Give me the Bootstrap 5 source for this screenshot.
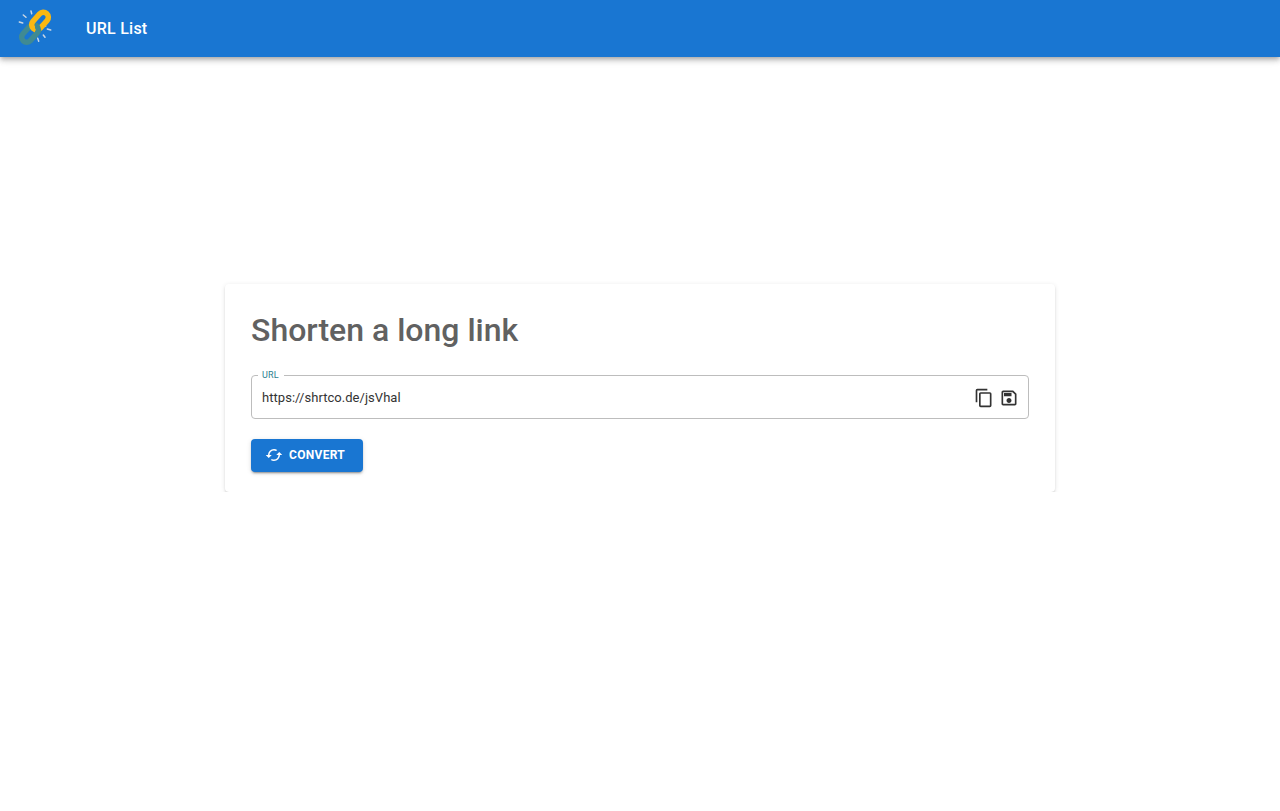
<!DOCTYPE html>
<html lang="en">
<head>
    <meta charset="UTF-8">
    <meta name="viewport" content="width=device-width, initial-scale=1.0">
    <title>URL List</title>
    <link href="https://cdn.jsdelivr.net/npm/bootstrap@5.3.0/dist/css/bootstrap.min.css" rel="stylesheet">
    <style>
        body { font-family: Roboto, "Liberation Sans", sans-serif; background: #fff; }
        .app-bar {
            height: 57px;
            background: #1976d2;
            padding: 0 16px;
            box-shadow: 0 2px 4px -1px rgba(0,0,0,.2), 0 4px 5px 0 rgba(0,0,0,.14), 0 1px 10px 0 rgba(0,0,0,.12);
        }
        .app-logo { width: 40px; height: 40px; margin-top: -5px; }
        .app-link { margin-left: 30px; font-size: 16px; font-weight: 500; letter-spacing: .25px; color: #fff; text-decoration: none; }
        .main-wrap { padding-top: 227px; }
        .short-card {
            width: 830px;
            height: 208px;
            padding: 26px 26px 0;
            border: 0;
            border-radius: 4px;
            box-shadow: 0 3px 1px -2px rgba(0,0,0,.12), 0 2px 2px 0 rgba(0,0,0,.1), 0 1px 5px 0 rgba(0,0,0,.1);
        }
        .short-title { font-size: 32px; font-weight: 500; line-height: 40px; color: #616161; margin: 0 0 21px 0; }
        .url-field {
            height: 48px;
            margin: 0 0 20px 0;
            padding: 0 10px;
            border: 1px solid #bdbdbd;
            border-radius: 4px;
        }
        .url-field legend {
            float: none;
            width: auto;
            margin: 0 0 0 -4px;
            padding: 0 5px 0 4px;
            font-size: 9px;
            letter-spacing: .2px;
            line-height: 9px;
            color: #2f7f8f;
        }
        .url-value { font-size: 13px; letter-spacing: .04px; line-height: 20px; color: #333; height: 36px; }
        .url-icon { width: 20px; height: 20px; fill: #333; display: block; }
        .url-actions { gap: 5px; margin-right: -1px; }
        .convert-btn {
            width: 112px;
            height: 33px;
            padding: 0 0 1px 14px;
            background: #1976d2;
            border: 0;
            border-radius: 4px;
            color: #fff;
            font-size: 12px;
            font-weight: 700;
            letter-spacing: .3px;
            box-shadow: 0 3px 1px -2px rgba(0,0,0,.2), 0 2px 2px 0 rgba(0,0,0,.14), 0 1px 5px 0 rgba(0,0,0,.12);
        }
        .convert-btn svg { width: 18px; height: 18px; fill: #fff; margin-right: -2px; }
    </style>
</head>
<body>
    <!-- Верхняя панель -->
    <header class="app-bar d-flex align-items-center">
        <svg class="app-logo" viewBox="0 0 40 40">
            <defs>
                <clipPath id="link-over"><rect x="19" y="17" width="11" height="10"/></clipPath>
            </defs>
            <g stroke="#c9d6e4" stroke-width="1.5" stroke-linecap="round">
                <path d="M7.300 9L10 11.300M15 5L15.700 7.700M3.300 16L6.700 17M27 18L29.700 20M31.300 23L34.700 24M27.300 29L29 31.300M21.700 32.300L22.700 35.300"/>
            </g>
            <g fill="none" stroke-width="5.500">
                <rect x="4" y="22.500" width="20" height="10" rx="5" transform="rotate(-48 14 27.500)" stroke="#3f8a93"/>
                <rect x="14" y="10" width="20" height="10" rx="5" transform="rotate(-48 24 15)" stroke="#fbb811"/>
                <g clip-path="url(#link-over)">
                    <rect x="4" y="22.500" width="20" height="10" rx="5" transform="rotate(-48 14 27.500)" stroke="#3f8a93"/>
                </g>
            </g>
        </svg>
        <a href="#" class="app-link">URL List</a>
    </header>

    <!-- Форма -->
    <main class="main-wrap d-flex justify-content-center">
        <div class="card short-card">
            <h1 class="short-title">Shorten a long link</h1>
            <fieldset class="url-field">
                <legend>URL</legend>
                <div class="url-value d-flex align-items-center justify-content-between">
                    <span>https://shrtco.de/jsVhal</span>
                    <span class="url-actions d-flex">
                        <svg class="url-icon" viewBox="0 0 24 24"><path d="M19,21H8V7H19M19,5H8A2,2 0 0,0 6,7V21A2,2 0 0,0 8,23H19A2,2 0 0,0 21,21V7A2,2 0 0,0 19,5M16,1H4A2,2 0 0,0 2,3V17H4V3H16V1Z"/></svg>
                        <svg class="url-icon" viewBox="0 0 24 24"><path d="M17 3H5C3.890 3 3 3.900 3 5V19C3 20.100 3.890 21 5 21H19C20.100 21 21 20.100 21 19V7L17 3M19 19H5V5H16.170L19 7.830V19M12 12C10.340 12 9 13.340 9 15S10.340 18 12 18 15 16.660 15 15 13.660 12 12 12M6 6H15V10H6V6Z"/></svg>
                    </span>
                </div>
            </fieldset>
            <button type="button" class="btn convert-btn d-flex align-items-center gap-2">
                <svg viewBox="0 0 24 24"><path d="M19,8L15,12H18A6,6 0 0,1 12,18C11,18 10.030,17.750 9.200,17.300L7.740,18.760C8.970,19.540 10.430,20 12,20A8,8 0 0,0 20,12H23M6,12A6,6 0 0,1 12,6C13,6 13.970,6.250 14.800,6.700L16.260,5.240C15.030,4.460 13.570,4 12,4A8,8 0 0,0 4,12H1L5,16L9,12"/></svg>
                CONVERT
            </button>
        </div>
    </main>

    <script src="https://cdn.jsdelivr.net/npm/bootstrap@5.3.0/dist/js/bootstrap.bundle.min.js"></script>
</body>
</html>
